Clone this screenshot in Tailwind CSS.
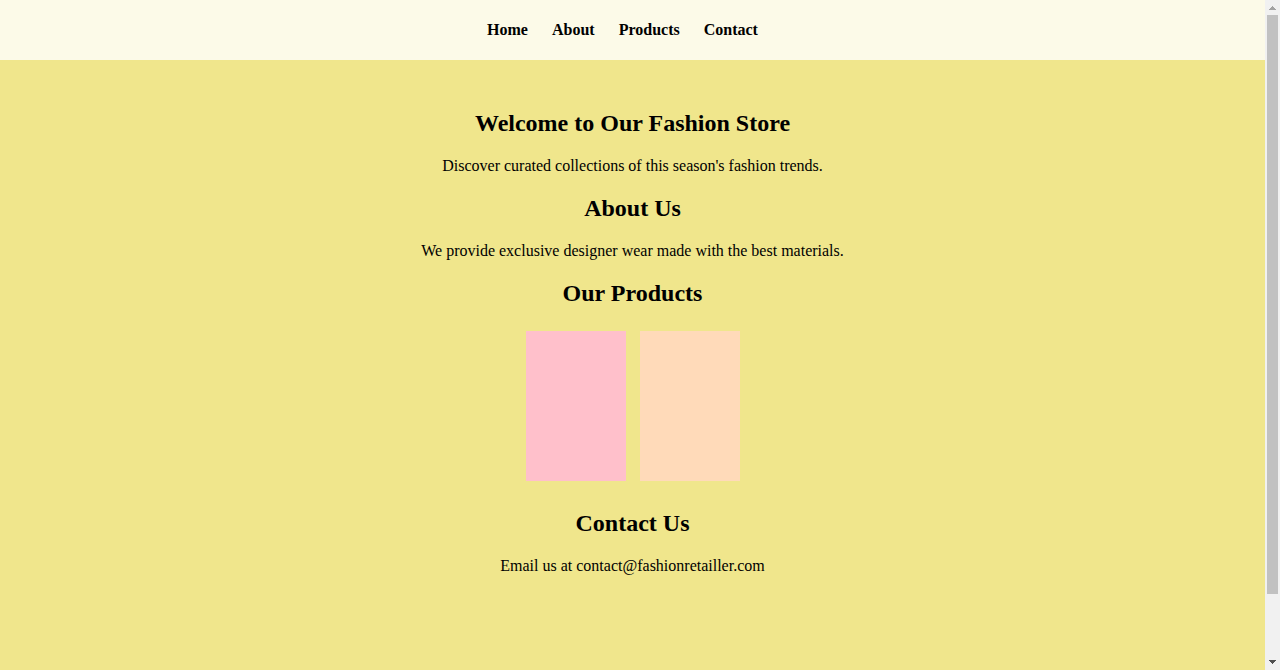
<!DOCTYPE html>
<html lang="en">
<head>
<meta charset="utf-8">
<meta name="viewport" content="width=device-width, initial-scale=1">
<title>Fashion Store</title>
<script src="https://cdn.jsdelivr.net/npm/@tailwindcss/browser@4"></script>
</head>
<body class="flex h-screen overflow-hidden bg-[#f0e68c] font-['Liberation_Serif',serif] text-base leading-[18px] text-black">
  <div class="min-w-0 flex-1">
    <header class="bg-white/80 py-5">
      <nav aria-label="Main">
        <ul class="flex h-5 items-center justify-center gap-6 pr-5 font-bold">
          <li><a href="#home">Home</a></li>
          <li><a href="#about">About</a></li>
          <li><a href="#products">Products</a></li>
          <li><a href="#contact">Contact</a></li>
        </ul>
      </nav>
    </header>
    <main class="flex flex-col gap-5 px-5 pt-[50px] text-center">
      <section id="home" class="flex flex-col gap-5">
        <h2 class="text-2xl leading-[27px] font-bold">Welcome to Our Fashion Store</h2>
        <p>Discover curated collections of this season's fashion trends.</p>
      </section>
      <section id="about" class="flex flex-col gap-5">
        <h2 class="text-2xl leading-[27px] font-bold">About Us</h2>
        <p>We provide exclusive designer wear made with the best materials.</p>
      </section>
      <section id="products" class="flex flex-col gap-6">
        <h2 class="text-2xl leading-[27px] font-bold">Our Products</h2>
        <div class="flex justify-center gap-[14px] pb-[9px]">
          <div class="h-[150px] w-[100px] bg-[#ffc0cb]"></div>
          <div class="h-[150px] w-[100px] bg-[#ffdab9]"></div>
        </div>
      </section>
      <section id="contact" class="flex flex-col gap-5">
        <h2 class="text-2xl leading-[27px] font-bold">Contact Us</h2>
        <p>Email us at contact@fashionretailler.com</p>
      </section>
    </main>
  </div>
  <div class="flex w-[15px] shrink-0 flex-col items-center bg-[#f1f1f1]" aria-hidden="true">
    <svg class="h-[15px] w-[15px] shrink-0" viewBox="0 0 15 15" shape-rendering="crispEdges" fill="#a3a3a3"><path d="M7 6h1v1h1v1h1v1h1v1H4V9h1V8h1V7h1z"/></svg>
    <div class="min-h-0 w-full flex-1 px-[2px]">
      <div class="h-[90.5%] w-[11px] bg-[#c1c1c1]"></div>
    </div>
    <svg class="h-[15px] w-[15px] shrink-0" viewBox="0 0 15 15" shape-rendering="crispEdges" fill="#505050"><path d="M4 5h7v1h-1v1H9v1H8v1H7V8H6V7H5V6H4z"/></svg>
  </div>
</body>
</html>
